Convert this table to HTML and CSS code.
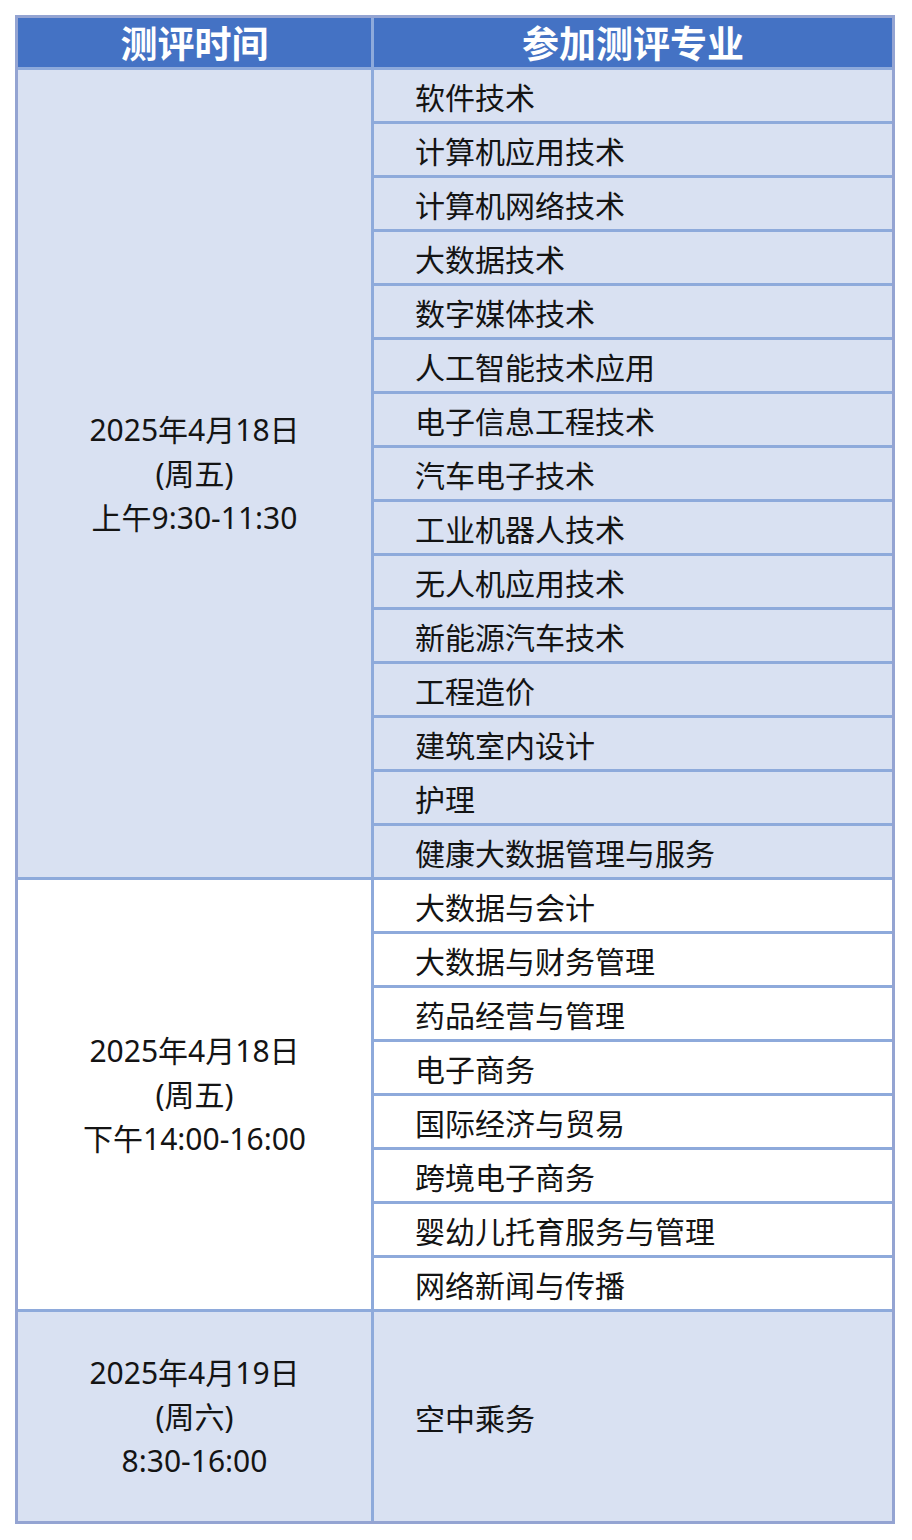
FILE: index.html
```html
<!DOCTYPE html>
<html lang="zh-CN">
<head>
<meta charset="utf-8">
<title>测评安排</title>
<link rel="stylesheet" href="styles.css">
</head>
<body>
<div class="sheet">
  <div class="head">测评时间</div>
  <div class="head">参加测评专业</div>

  <div class="time shade span15">2025年4月18日<br>(周五)<br>上午9:30-11:30</div>
  <div class="major shade">软件技术</div>
  <div class="major shade">计算机应用技术</div>
  <div class="major shade">计算机网络技术</div>
  <div class="major shade">大数据技术</div>
  <div class="major shade">数字媒体技术</div>
  <div class="major shade">人工智能技术应用</div>
  <div class="major shade">电子信息工程技术</div>
  <div class="major shade">汽车电子技术</div>
  <div class="major shade">工业机器人技术</div>
  <div class="major shade">无人机应用技术</div>
  <div class="major shade">新能源汽车技术</div>
  <div class="major shade">工程造价</div>
  <div class="major shade">建筑室内设计</div>
  <div class="major shade">护理</div>
  <div class="major shade">健康大数据管理与服务</div>

  <div class="time plain span8">2025年4月18日<br>(周五)<br>下午14:00-16:00</div>
  <div class="major plain">大数据与会计</div>
  <div class="major plain">大数据与财务管理</div>
  <div class="major plain">药品经营与管理</div>
  <div class="major plain">电子商务</div>
  <div class="major plain">国际经济与贸易</div>
  <div class="major plain">跨境电子商务</div>
  <div class="major plain">婴幼儿托育服务与管理</div>
  <div class="major plain">网络新闻与传播</div>

  <div class="time shade">2025年4月19日<br>(周六)<br>8:30-16:00</div>
  <div class="major shade tall">空中乘务</div>
</div>
</body>
</html>
```

FILE: styles.css
```css
html, body {
  margin: 0;
  padding: 0;
  background: #ffffff;
}

.sheet {
  margin: 15px 0 0 15px;
  width: 880px;
  box-sizing: border-box;
  display: grid;
  grid-template-columns: 353px 518px;
  gap: 3px;
  border: 3px solid #94a4d2;
  background: #8eaadb;
  font-family: "Noto Sans CJK SC", "Noto Sans", sans-serif;
  color: #141414;
}

.head {
  height: 49px;
  background: #4472c4;
  color: #ffffff;
  font-weight: 700;
  font-size: 37px;
  display: flex;
  align-items: center;
  justify-content: center;
  line-height: 1;
}

.time {
  grid-column: 1;
  display: flex;
  align-items: center;
  justify-content: center;
  text-align: center;
  font-family: "Noto Sans", "Noto Sans CJK SC", sans-serif;
  font-size: 30px;
  line-height: 44px;
}

.span15 { grid-row: span 15; }
.span8 { grid-row: span 8; }

.major {
  grid-column: 2;
  height: 51px;
  display: flex;
  align-items: center;
  padding-left: 41px;
  font-size: 30px;
  line-height: 1;
}

.major.tall { height: 209px; }

.shade { background: #d9e1f2; }
.plain { background: #ffffff; }
```
